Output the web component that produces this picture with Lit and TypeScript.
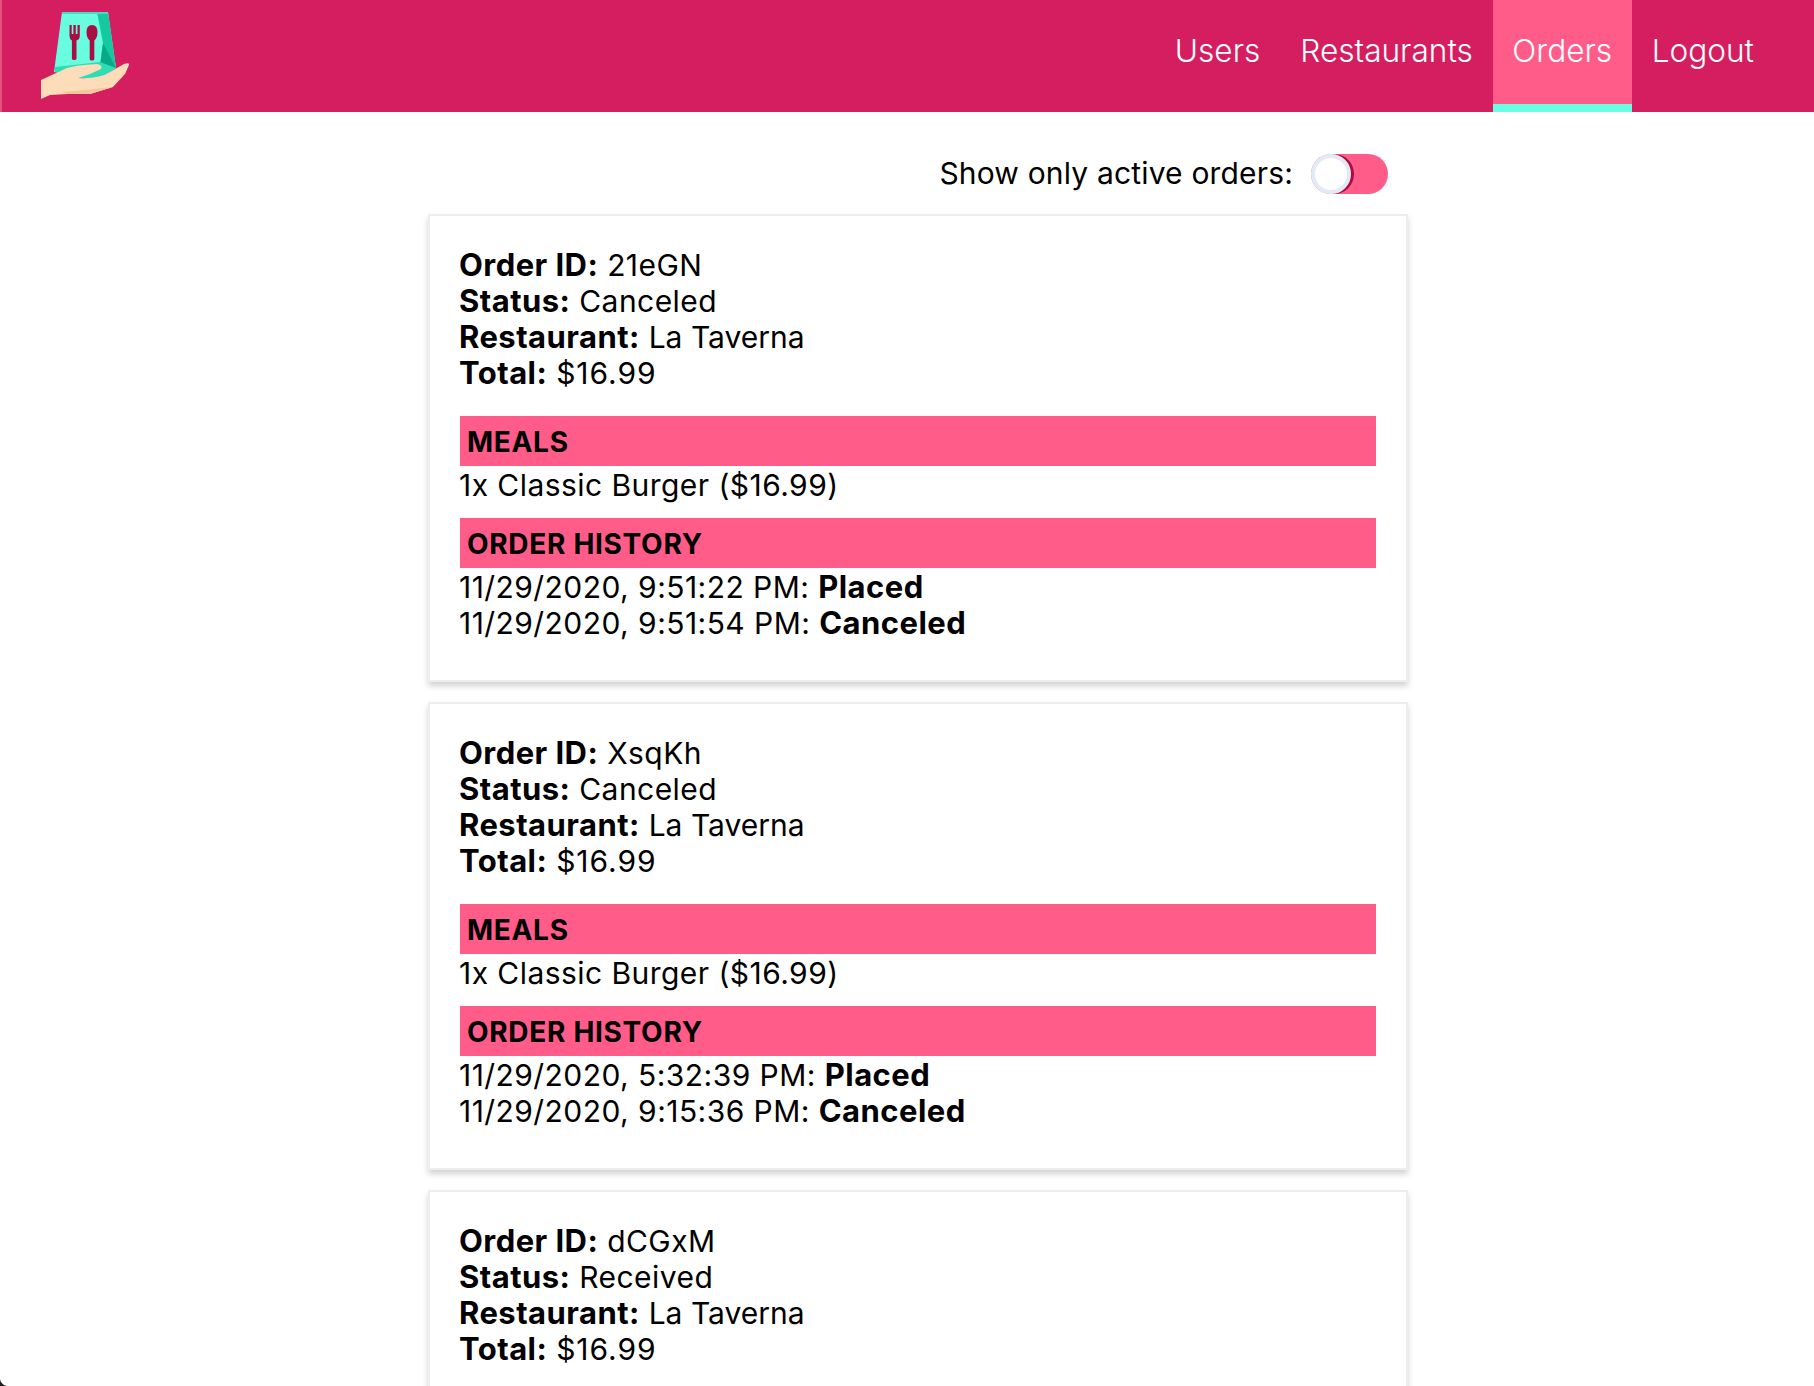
import { LitElement, html, css, svg } from "lit";
import { customElement } from "lit/decorators.js";

interface Order {
  id: string;
  status: string;
  history: [string, string][];
}

const ORDERS: Order[] = [
  { id: "21eGN", status: "Canceled", history: [["11/29/2020, 9:51:22 PM", "Placed"], ["11/29/2020, 9:51:54 PM", "Canceled"]] },
  { id: "XsqKh", status: "Canceled", history: [["11/29/2020, 5:32:39 PM", "Placed"], ["11/29/2020, 9:15:36 PM", "Canceled"]] },
  { id: "dCGxM", status: "Received", history: [] },
];

const logo = svg`<svg class="logo" viewBox="0 0 90 92" width="90" height="92" aria-hidden="true">
  <g transform="translate(-41,-12)">
    <polygon points="62,12 108,12 116,68 100,78 54,72" fill="#69fde0"/>
    <polygon points="97,12 108,12 116,68 100,66 103,43" fill="#14c9a0"/>
    <polygon points="103,43 116,68 100,66" fill="#0aa985"/>
    <polygon points="62,12 108,12 108,14 62,14" fill="#45dcc2"/>
    <polygon points="55,67 100,62 116,68 100,78 78,78 55,72" fill="#2fdcb4"/>
    <path d="M69.500 25 h2.200 v9 h1.700 v-9 h2.400 v9 h1.700 v-9 h2.300 v11 q0 3.500 -3.300 4.500 v18 q0 1.500 -2.300 1.500 q-2.300 0 -2.300 -1.500 v-18 q-2.400 -1 -2.400 -4.500 z" fill="#a90d42"/>
    <path d="M92 25 q5.500 0 5.500 7 q0 6 -3.200 8.500 l0 18.500 q0 1.500 -2.300 1.500 q-2.300 0 -2.300 -1.500 l0 -18.500 q-3.200 -2.500 -3.200 -8.500 q0 -7 5.500 -7 z" fill="#a90d42"/>
    <path d="M41 80 L67 68 Q76 65 97 64 Q103 65 101 69 L90 74 L78 78 Q100 79 110 72 L124 64 Q130 62 129 65 L125 74 L113 87 L90 94 L68 94 L50 95 L41 99 z" fill="#fcdcb9"/>
    <path d="M62 92 Q85 90 113 87 L90 94 L68 94 z" fill="#f2c69e"/>
  </g>
</svg>`;

@customElement("app-root")
export class AppRoot extends LitElement {
  static styles = css`
    :host {
      display: block;
      position: relative;
      height: 100vh;
      overflow: hidden;
      background: #fff;
      color: #000;
      font-family: Inter, "Liberation Sans", sans-serif;
      font-size: 30px;
      line-height: 36px;
    }
    header {
      height: 112px;
      background: #d51e60;
      display: flex;
      align-items: stretch;
      justify-content: space-between;
      border-left: 2px solid #e2547f;
      padding-right: 40px;
    }
    .logo { margin: 12px 0 0 39px; display: block; }
    nav { display: flex; align-items: stretch; }
    nav a {
      color: #fff;
      font-size: 31.6px;
      font-weight: 300;
      padding: 0 20px 2px;
      display: flex;
      align-items: center;
      border-bottom: 8px solid transparent;
    }
    nav a.active { background: #ff5c8a; border-bottom-color: #68ffe5; padding: 0 19.500px 2px; }
    main { width: 980px; margin-left: 428px; }
    .filter {
      display: flex;
      justify-content: flex-end;
      align-items: center;
      gap: 18px;
      padding: 20px 20px 0 0;
      height: 102px;
      box-sizing: border-box;
      letter-spacing: 0.17px;
    }
    .toggle {
      position: relative;
      width: 77px;
      height: 40px;
      margin-top: 2px;
      border-radius: 20px;
      background: #ff5c8a;
    }
    .knob {
      position: absolute;
      left: 0;
      top: 0;
      width: 32px;
      height: 32px;
      border: 4px solid #e4e9f6;
      border-radius: 50%;
      background: #fff;
      box-shadow: 3px 0 0 #a90d42;
    }
    .card {
      border: 2px solid #eeeeee;
      box-shadow: 0 4px 6px rgba(0, 0, 0, 0.18);
      padding: 31px 30px 31px;
      margin-bottom: 20px;
      background: #fff;
    }
    b {
      font-size: 31px;
      font-weight: 700;
      letter-spacing: 0.45px;
    }
    .row, .line { margin-left: -1px; letter-spacing: 0.45px; }
    .plain { letter-spacing: 0; }
    .price { letter-spacing: 0.95px; }
    .meals { margin-top: 25px; }
    .hist { margin-top: 15px; }
    h3 {
      margin: 0;
      background: #ff5c8a;
      font-size: 28px;
      font-weight: 700;
      letter-spacing: 0.7px;
      line-height: 52px;
      height: 50px;
      padding-left: 7px;
    }
    .line { min-height: 36px; }
    .first { margin-top: 1px; }
    .hist .body { padding-bottom: 8px; }
    .corner {
      position: absolute;
      left: 0;
      bottom: 0;
      width: 8px;
      height: 8px;
      background: radial-gradient(circle at 100% 0, transparent 7.5px, #222 8.5px);
    }
  `;

  render() {
    return html`
      <header>
        ${logo}
        <nav>
          <a>Users</a>
          <a>Restaurants</a>
          <a class="active">Orders</a>
          <a>Logout</a>
        </nav>
      </header>
      <main>
        <div class="filter">
          <span>Show only active orders:</span>
          <div class="toggle"><div class="knob"></div></div>
        </div>
        ${ORDERS.map(
          (o) => html`
            <section class="card">
              <div class="row"><b>Order ID:</b> ${o.id}</div>
              <div class="row"><b>Status:</b> ${o.status}</div>
              <div class="row"><b>Restaurant:</b> <span class="plain">La Taverna</span></div>
              <div class="row"><b>Total:</b> <span class="price">$16.99</span></div>
              <div class="meals">
                <h3>MEALS</h3>
                <div class="line first">1x Classic Burger ($16.99)</div>
              </div>
              <div class="hist">
                <h3>ORDER HISTORY</h3>
                <div class="body">
                  ${o.history.map(
                    ([t, s], i) => html`<div class="line ${i === 0 ? "first" : ""}">${t}: <b>${s}</b></div>`
                  )}
                </div>
              </div>
            </section>
          `
        )}
      </main>
      <div class="corner"></div>
    `;
  }
}
